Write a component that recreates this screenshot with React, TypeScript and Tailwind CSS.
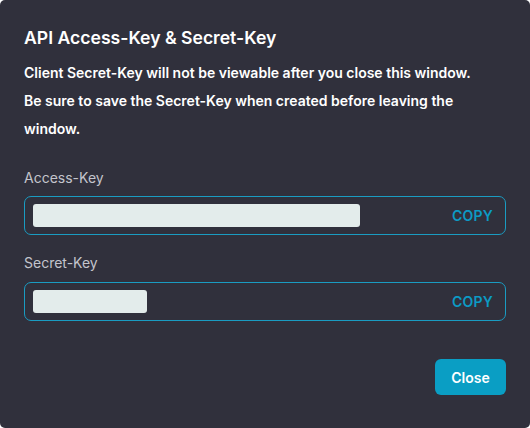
export default function App() {
  return (
    <div className="h-[428px] w-[530px] bg-white font-['Inter',sans-serif]">
      <div className="flex h-full flex-col rounded-[5px] bg-[#30303c] px-6 pt-[26px]">
        <h2 className="text-[17.6px] font-semibold leading-6 text-white">API Access-Key &amp; Secret-Key</h2>
        <p className="mt-[9px] text-[14px] font-semibold leading-[28px] text-white">
          Client Secret-Key will not be viewable after you close this window.
          <br />
          Be sure to save the Secret-Key when created before leaving the window.
        </p>

        <div className="mt-[25px] text-[14px] leading-5 text-[#c3c4cc]">Access-Key</div>
        <div className="mt-[8px] flex h-[39px] items-center rounded-[7px] border border-[#1a9cc2] pl-2 pr-[12px]">
          <div className="h-[23px] w-[327px] rounded-[3px] bg-[#e3eceb]" />
          <span className="ml-auto text-[14px] font-semibold tracking-[0.2px] text-[#0c9ac4]">COPY</span>
        </div>

        <div className="mt-[18px] text-[14px] leading-5 text-[#c3c4cc]">Secret-Key</div>
        <div className="mt-[9px] flex h-[39px] items-center rounded-[7px] border border-[#1a9cc2] pl-2 pr-[12px]">
          <div className="h-[23px] w-[114px] rounded-[3px] bg-[#e3eceb]" />
          <span className="ml-auto text-[14px] font-semibold tracking-[0.2px] text-[#0c9ac4]">COPY</span>
        </div>

        <div className="mt-[38px] flex justify-end">
          <button className="h-[36px] w-[71px] rounded-[6px] bg-[#0a9ec4] text-[14px] font-semibold text-white">
            Close
          </button>
        </div>
      </div>
    </div>
  )
}
